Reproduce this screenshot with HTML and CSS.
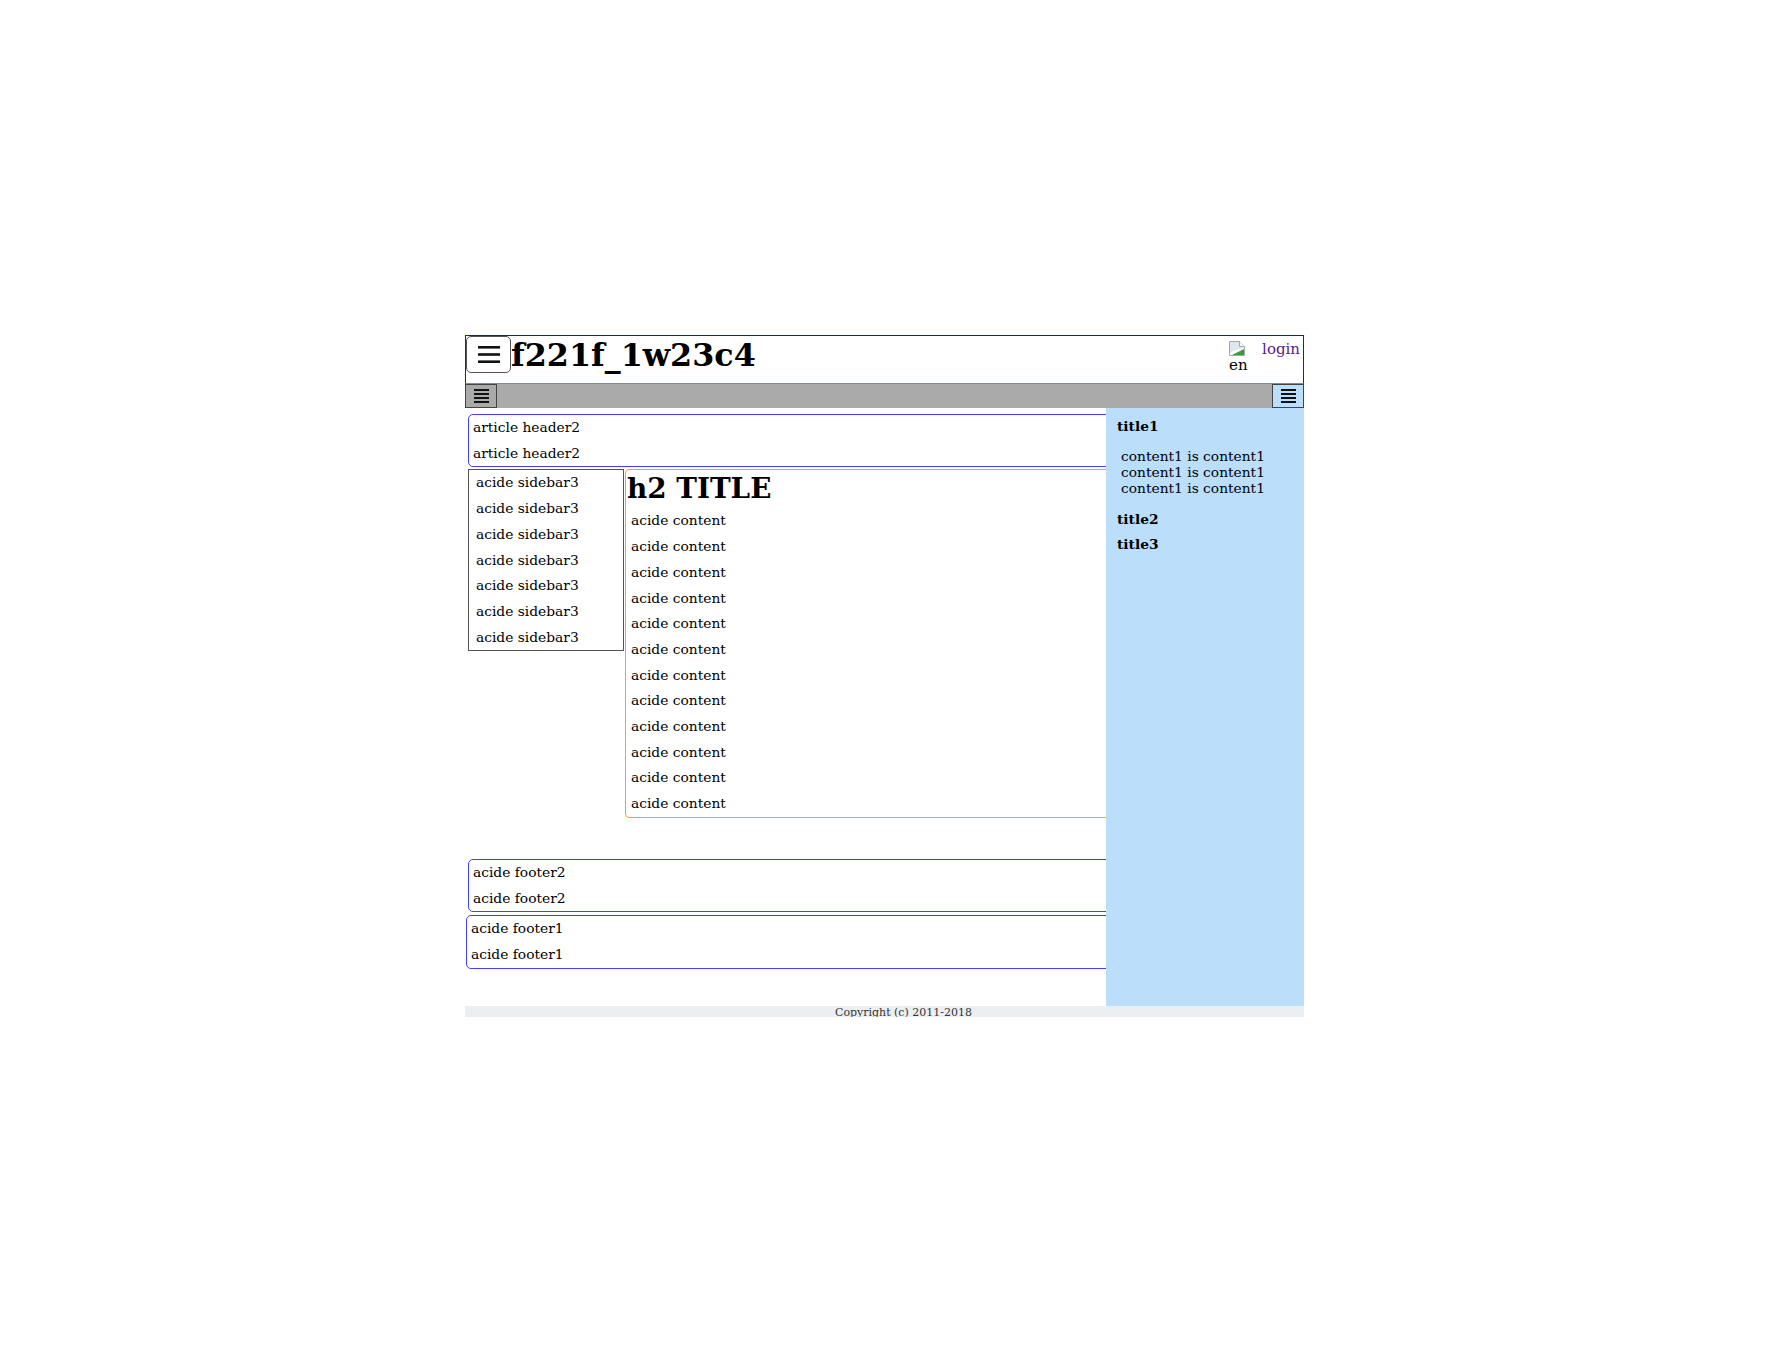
FILE: index.html
```html
<!DOCTYPE html>
<html lang="en">
<head>
<meta charset="utf-8">
<title>f221f_1w23c4</title>
<link rel="stylesheet" href="styles.css">
</head>
<body>
<div class="page">
  <header class="top">
    <button class="menu-btn" type="button" aria-label="menu">
      <svg width="22" height="17" viewBox="0 0 22 17"><rect x="0" y="0" width="22" height="2.6" fill="#111"/><rect x="0" y="7.2" width="22" height="2.6" fill="#111"/><rect x="0" y="14.4" width="22" height="2.6" fill="#111"/></svg>
    </button>
    <h1 class="site-title">f221f_1w23c4</h1>
    <div class="top-right">
      <span class="lang">
        <svg class="broken" width="16" height="15" viewBox="0 0 16 15">
          <path d="M0.5 0.5 H10.5 L15.5 5.5 V14.5 H0.5 Z" fill="#dfe6ee" stroke="#a0a8b0"/>
          <path d="M10.5 0.5 V5.5 H15.5" fill="#ffffff" stroke="#a0a8b0"/>
          <path d="M1 14 V12 L5 9.5 L15 6.5 V14 Z" fill="#ffffff"/>
          <path d="M3 14 L15 8 V14 Z" fill="#3d9b35"/>
        </svg>
        <span class="lang-alt">en</span>
      </span>
      <a class="login" href="#">login</a>
    </div>
  </header>
  <nav class="toolbar">
    <button class="bar-btn bar-left" type="button" aria-label="left menu">
      <svg width="15" height="14" viewBox="0 0 15 14"><rect y="0" width="15" height="2" fill="#111"/><rect y="4" width="15" height="2" fill="#111"/><rect y="8" width="15" height="2" fill="#111"/><rect y="12" width="15" height="2" fill="#111"/></svg>
    </button>
    <button class="bar-btn bar-right" type="button" aria-label="right menu">
      <svg width="15" height="14" viewBox="0 0 15 14"><rect y="0" width="15" height="2" fill="#111"/><rect y="4" width="15" height="2" fill="#111"/><rect y="8" width="15" height="2" fill="#111"/><rect y="12" width="15" height="2" fill="#111"/></svg>
    </button>
  </nav>
  <div class="body">
    <main class="main">
      <div class="box art-head">
        <div class="line">article header2</div>
        <div class="line">article header2</div>
      </div>
      <div class="row">
        <ul class="side3">
          <li class="line">acide sidebar3</li>
          <li class="line">acide sidebar3</li>
          <li class="line">acide sidebar3</li>
          <li class="line">acide sidebar3</li>
          <li class="line">acide sidebar3</li>
          <li class="line">acide sidebar3</li>
          <li class="line">acide sidebar3</li>
        </ul>
        <section class="content">
          <h2 class="content-title">h2 TITLE</h2>
          <div class="line item">acide content</div>
          <div class="line item">acide content</div>
          <div class="line item">acide content</div>
          <div class="line item">acide content</div>
          <div class="line item">acide content</div>
          <div class="line item">acide content</div>
          <div class="line item">acide content</div>
          <div class="line item">acide content</div>
          <div class="line item">acide content</div>
          <div class="line item">acide content</div>
          <div class="line item">acide content</div>
          <div class="line item">acide content</div>
        </section>
      </div>
      <div class="box foot2">
        <div class="line">acide footer2</div>
        <div class="line">acide footer2</div>
      </div>
      <div class="box foot1">
        <div class="line">acide footer1</div>
        <div class="line">acide footer1</div>
      </div>
    </main>
    <aside class="aside">
      <div class="a-title">title1</div>
      <div class="a-content">content1 is content1<br>content1 is content1<br>content1 is content1</div>
      <div class="a-title">title2</div>
      <div class="a-title">title3</div>
    </aside>
  </div>
  <footer class="copy">Copyright (c) 2011-2018</footer>
</div>
</body>
</html>
```

FILE: styles.css
```css
html, body {
  margin: 0;
  padding: 0;
  background: #ffffff;
}

body {
  font-family: "DejaVu Serif", "Liberation Serif", serif;
  font-size: 13.8px;
  color: #000;
}

.page {
  width: 839px;
  margin: 335px 0 0 465px;
}

/* header */
.top {
  display: flex;
  align-items: flex-start;
  height: 49px;
  box-sizing: border-box;
  border: 1px solid #1010ff;
  border-bottom-color: #7a7aff;
}

.menu-btn {
  width: 45px;
  height: 37px;
  margin: 0;
  padding: 0;
  box-sizing: border-box;
  border: 1px solid #555;
  border-radius: 5px;
  background: #fff;
  display: flex;
  align-items: center;
  justify-content: center;
  flex: none;
}

.site-title {
  margin: 0;
  font-size: 31.8px;
  font-weight: bold;
  line-height: normal;
}

.top-right {
  margin-left: auto;
  display: flex;
  align-items: flex-start;
  gap: 13px;
  padding: 4px 3px 0 0;
  font-size: 15px;
}

.lang {
  display: flex;
  flex-direction: column;
  width: 20px;
  margin-top: 1px;
}

.broken {
  display: block;
}

.lang-alt {
  line-height: normal;
}

.login {
  color: #551a8b;
  text-decoration: none;
  line-height: normal;
}

/* toolbar */
.toolbar {
  display: flex;
  justify-content: space-between;
  height: 24px;
  background: #aaaaaa;
}

.bar-btn {
  width: 32px;
  height: 24px;
  margin: 0;
  padding: 0;
  box-sizing: border-box;
  border: 1px solid #444;
  background: #aaaaaa;
  display: flex;
  align-items: center;
  justify-content: center;
}

.bar-right {
  background: #bbdefb;
}

/* body */
.body {
  position: relative;
}

.main {
  padding: 6px 0 37px 0;
}

.line {
  line-height: 25.7px;
}

.box {
  border: 1px solid #4040ff;
  border-radius: 5px;
}

.art-head {
  margin: 0 3px 2px 3px;
  padding-left: 4px;
}

.row {
  display: flex;
  align-items: flex-start;
  margin: 0 3px 0 3px;
}

.side3 {
  list-style: none;
  margin: 0;
  padding: 0 0 0 7px;
  width: 156px;
  box-sizing: border-box;
  border: 1px solid #555;
  flex: none;
}

.content {
  flex: 1;
  margin-left: 1px;
  padding-left: 1px;
  border: 1px solid #ffa500;
  border-radius: 4px;
}

.content-title {
  margin: 0;
  font-size: 27.8px;
  font-weight: bold;
  line-height: 38px;
}

.item {
  padding-left: 4px;
}

.foot2 {
  margin: 41px 3px 3px 3px;
  padding-left: 4px;
}

.foot1 {
  margin: 0 3px 0 1px;
  padding-left: 4px;
}

/* right aside */
.aside {
  position: absolute;
  top: 0;
  right: 0;
  bottom: 0;
  width: 198px;
  box-sizing: border-box;
  padding: 6px 11px 5px;
  background: #bbdefb;
}

.a-title {
  font-weight: bold;
  line-height: 25.7px;
}

.a-content {
  margin: 8px 0 11px;
  padding-left: 4px;
  line-height: 16px;
}

/* copyright */
.copy {
  height: 11px;
  overflow: hidden;
  background: #eceff1;
  font-size: 11px;
  line-height: normal;
  text-align: center;
  padding-left: 38px;
  color: #333;
}
```
